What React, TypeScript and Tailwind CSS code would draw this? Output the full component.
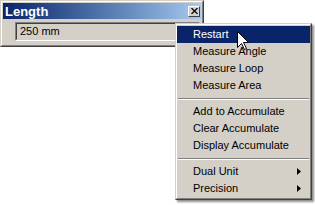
import React from "react";

type Item = { label: string; submenu?: boolean; active?: boolean } | "sep";

const items: Item[] = [
  { label: "Restart", active: true },
  { label: "Measure Angle" },
  { label: "Measure Loop" },
  { label: "Measure Area" },
  "sep",
  { label: "Add to Accumulate" },
  { label: "Clear Accumulate" },
  { label: "Display Accumulate" },
  "sep",
  { label: "Dual Unit", submenu: true },
  { label: "Precision", submenu: true },
];

const font = "font-['Liberation_Sans',Arial,sans-serif]";

function CloseButton() {
  return (
    <div className="w-[12px] h-[11px] border-t border-l border-white border-r border-b border-r-[#404040] border-b-[#404040] bg-[#d4d0c8] flex items-center justify-center">
      <svg width="7" height="6" viewBox="0 0 7 6">
        <path d="M0.5 0 L6.5 6 M6.5 0 L0.5 6" stroke="#000" strokeWidth="1.2" />
      </svg>
    </div>
  );
}

function LengthWindow() {
  return (
    <div className="w-[204px] h-[47px] border border-t-[#d4d0c8] border-l-[#d4d0c8] border-r-[#404040] border-b-[#404040]">
      <div className="h-full border border-t-white border-l-white border-r-[#808080] border-b-[#808080] bg-[#d4d0c8] p-px">
        <div className="h-[16px] flex items-center justify-between pl-[2px] pr-[1px] bg-gradient-to-r from-[#0a246a] to-[#a6caf0]">
          <span className={`${font} text-[13px] font-bold text-white leading-none`}>Length</span>
          <CloseButton />
        </div>
        <div className="mt-[3px] ml-[12px] w-[185px] h-[19px] border border-t-[#808080] border-l-[#808080] border-r-white border-b-white">
          <div className="h-full border border-t-[#404040] border-l-[#404040] border-r-[#d4d0c8] border-b-[#d4d0c8] flex items-center pl-[3px]">
            <span className={`${font} text-[11px] text-black leading-none`}>250 mm</span>
          </div>
        </div>
      </div>
    </div>
  );
}

function ContextMenu() {
  return (
    <div className="absolute left-[175px] top-[23px] w-[137px] shadow-[2px_2px_2px_rgba(0,0,0,0.45)] border border-t-[#d4d0c8] border-l-[#d4d0c8] border-r-[#404040] border-b-[#404040]">
      <div className="border border-t-white border-l-white border-r-[#808080] border-b-[#808080] bg-[#d4d0c8] py-px">
        {items.map((it, i) =>
          it === "sep" ? (
            <div key={i} className="h-[9px] flex flex-col justify-center px-px">
              <div className="h-px bg-[#808080]" />
              <div className="h-px bg-white" />
            </div>
          ) : (
            <div
              key={i}
              className={`h-[17px] flex items-center justify-between pl-[16px] pr-[9px] ${font} text-[11px] leading-none ${
                it.active ? "bg-[#0a246a] text-white" : "text-black"
              }`}
            >
              <span>{it.label}</span>
              {it.submenu && (
                <svg width="4" height="7" viewBox="0 0 4 7">
                  <path d="M0 0 L4 3.5 L0 7 Z" fill="#000" />
                </svg>
              )}
            </div>
          )
        )}
      </div>
    </div>
  );
}

function Cursor() {
  return (
    <svg className="absolute left-[237px] top-[31px]" width="13" height="20" viewBox="0 0 13 20">
      <path
        d="M0.5 0.5 L0.5 16.5 L4.5 12.5 L7.5 18.5 L9.5 17.5 L6.5 11.5 L11.5 11.5 Z"
        fill="#fff"
        stroke="#000"
        strokeWidth="1"
        strokeLinejoin="miter"
      />
    </svg>
  );
}

export default function App() {
  return (
    <div className="relative w-[315px] h-[205px] bg-white overflow-hidden">
      <LengthWindow />
      <ContextMenu />
      <Cursor />
    </div>
  );
}
